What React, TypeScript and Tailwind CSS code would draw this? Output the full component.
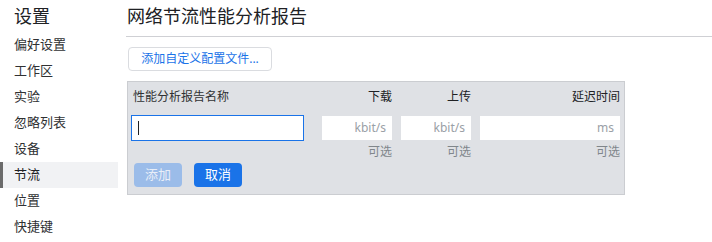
const sideItems = ['偏好设置', '工作区', '实验', '忽略列表', '设备', '节流', '位置', '快捷键']

const font = { fontFamily: '"Noto Sans", "Noto Sans CJK SC", sans-serif' }

const SmallField = ({ unit, w }: { unit: string; w: string }) => (
  <div className={`flex h-6 items-center justify-end bg-white pr-[6px] text-xs text-[#9aa0a6] ${w}`}>
    {unit}
  </div>
)

export default function App() {
  return (
    <div className="flex h-[242px] w-[712px] bg-white text-[#303133]" style={font}>
      <aside className="w-[118px] shrink-0">
        <div className="flex h-8 items-center pl-[14px] text-[18px] leading-none text-[#202124]">设置</div>
        {sideItems.map((item) => (
          <div
            key={item}
            className={`flex h-[26px] items-center text-[13px] ${
              item === '节流'
                ? 'border-l-[3px] border-[#6b6b6b] bg-[#f1f2f4] pl-[11px] text-[#202124]'
                : 'pl-[14px]'
            }`}
          >
            {item}
          </div>
        ))}
      </aside>

      <main className="flex-1 pl-[9px]">
        <div className="-ml-[1px] flex h-[37px] items-center border-b border-[#cfd0d4] pb-[3px] pl-[1px] text-[18px] text-[#202124]">
          网络节流性能分析报告
        </div>

        <button className="mt-[10px] ml-[1px] flex h-6 w-[144px] items-center justify-center rounded-[4px] border border-[#dadce0] bg-white text-xs text-[#1a73e8]">
          添加自定义配置文件...
        </button>

        <div className="mt-[10px] w-[498px] border border-[#cbcdd1] bg-[#dfe1e5] pl-[3px] pr-[4px] pt-[7px] pb-[7px]">
          <div className="grid grid-cols-[182px_70px_70px_140px] items-center gap-x-[9px]">
            <div className="h-4 pl-[2px] text-xs leading-4 text-[#303133]">性能分析报告名称</div>
            <div className="h-4 text-right text-xs leading-4 text-[#202124]">下载</div>
            <div className="h-4 text-right text-xs leading-4 text-[#202124]">上传</div>
            <div className="h-4 text-right text-xs leading-4 text-[#202124]">延迟时间</div>

            <div className="mt-[10px] flex h-[26px] w-[173px] items-center border border-[#1a73e8] bg-white pl-[6px]">
              <span className="h-[14px] w-px bg-[#202124]" />
            </div>
            <div className="mt-[10px] flex h-[26px] items-center">
              <SmallField unit="kbit/s" w="w-[70px]" />
            </div>
            <div className="mt-[10px] flex h-[26px] items-center">
              <SmallField unit="kbit/s" w="w-[70px]" />
            </div>
            <div className="mt-[10px] flex h-[26px] items-center">
              <SmallField unit="ms" w="w-[140px]" />
            </div>

            <div className="mt-[3px] h-4" />
            <div className="mt-[3px] h-4 text-right text-xs leading-4 text-[#80868b]">可选</div>
            <div className="mt-[3px] h-4 text-right text-xs leading-4 text-[#80868b]">可选</div>
            <div className="mt-[3px] h-4 text-right text-xs leading-4 text-[#80868b]">可选</div>
          </div>

          <div className="mt-[3px] flex gap-3 pl-[3px]">
            <button className="flex h-6 w-12 items-center justify-center rounded-[4px] bg-[#9bbce9] text-[13px] text-[#e8eef8]">
              添加
            </button>
            <button className="flex h-6 w-12 items-center justify-center rounded-[4px] bg-[#1a73e8] text-[13px] text-white">
              取消
            </button>
          </div>
        </div>
      </main>
    </div>
  )
}
